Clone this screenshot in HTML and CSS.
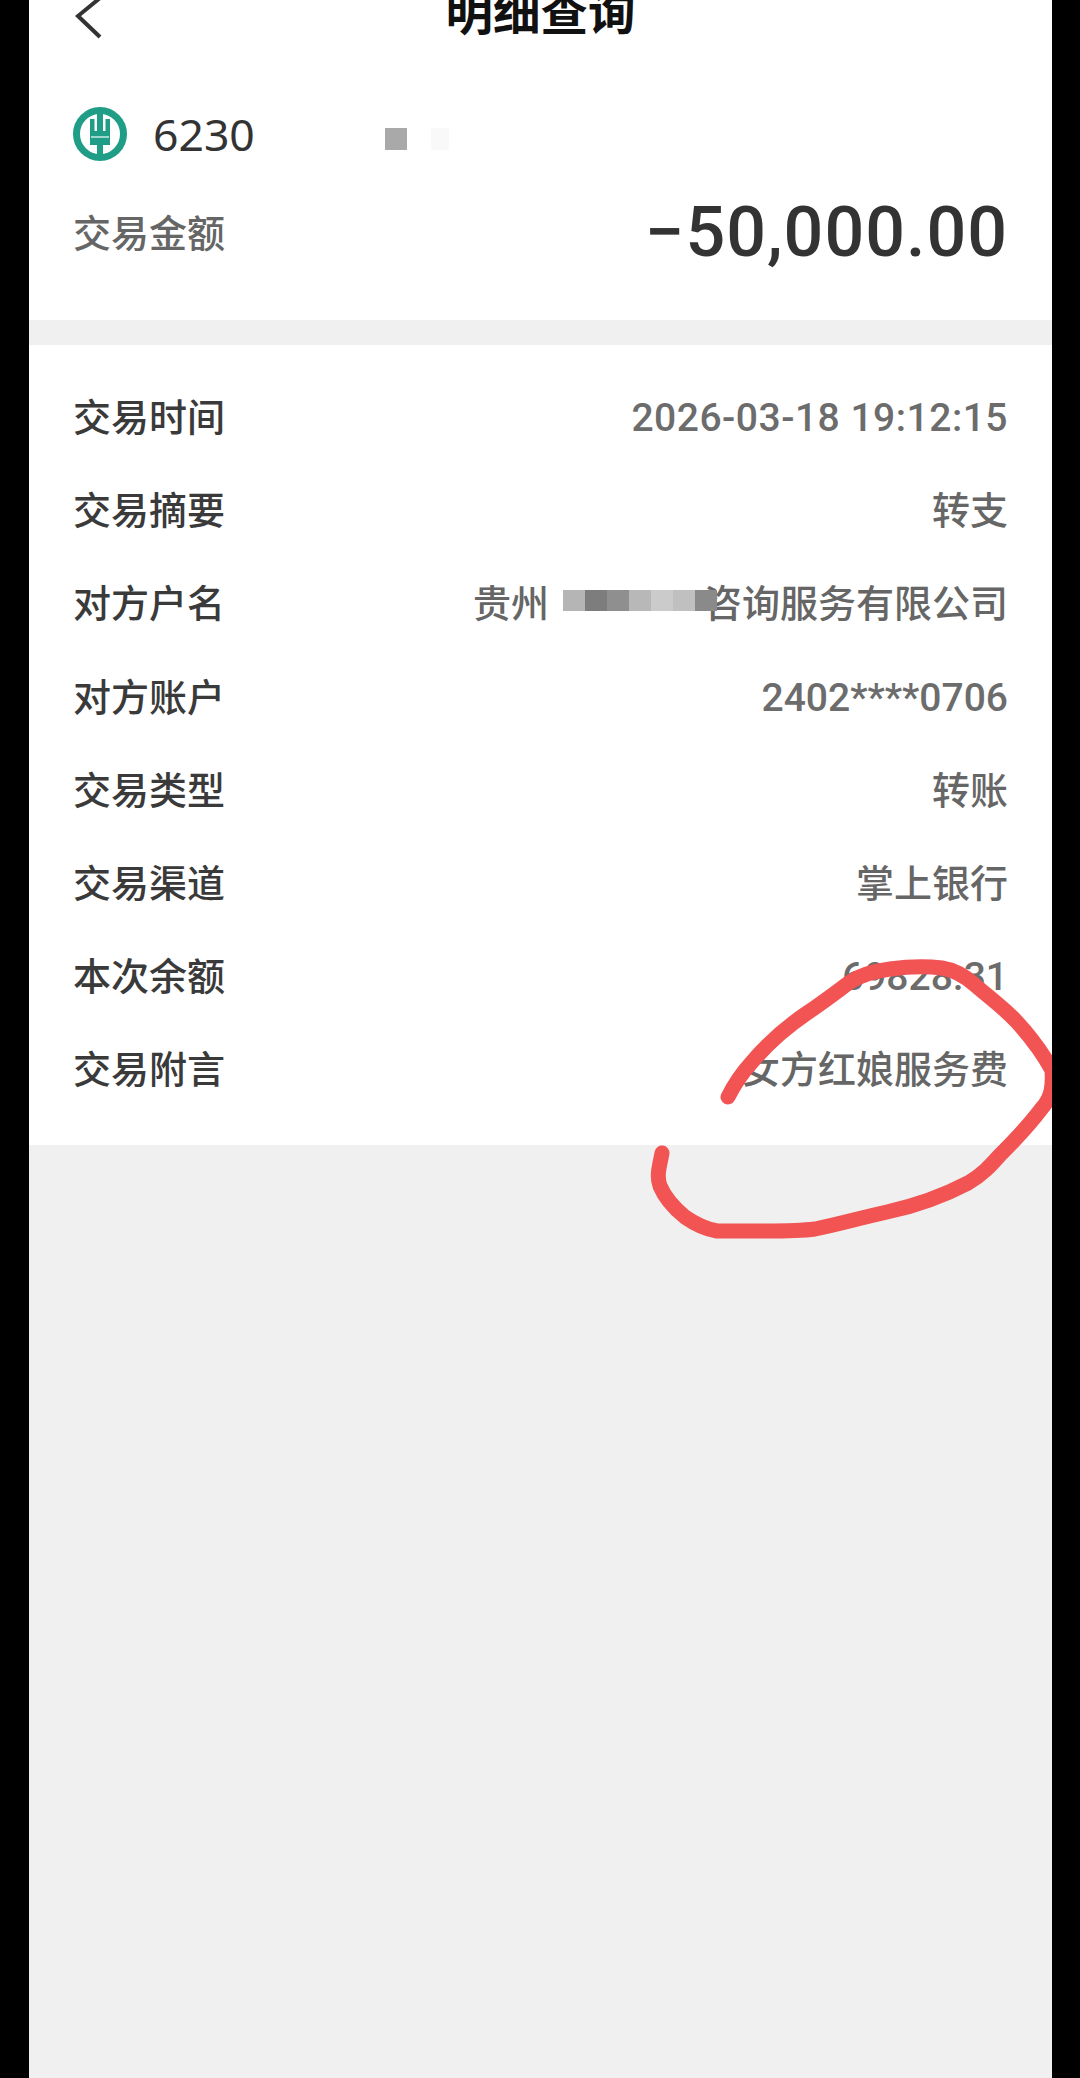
FILE: index.html
```html
<!DOCTYPE html>
<html lang="zh-CN">
<head>
  <meta charset="UTF-8">
  <meta name="viewport" content="width=device-width, initial-scale=1.0">
  <title>明细查询</title>
  <link rel="stylesheet" href="styles.css">
</head>
<body>
  <div class="page">
    <div class="header">
      <svg class="back" width="32" height="40" viewBox="0 0 32 40">
        <path d="M29 -2 L7 16 L29 37" fill="none" stroke="#333" stroke-width="4"/>
      </svg>
      <h1 class="title">明细查询</h1>
    </div>

    <div class="summary">
      <div class="card-row">
        <svg class="logo" width="56" height="56" viewBox="0 0 56 56">
          <circle cx="28" cy="28" r="23.5" fill="none" stroke="#1f9d86" stroke-width="7"/>
          <path d="M18 13 V39 H38 V13 H33.500 V25 H22.500 V13 Z" fill="#1f9d86"/>
          <rect x="25" y="3" width="6" height="22" fill="#1f9d86"/>
          <rect x="25" y="39" width="6" height="15" fill="#1f9d86"/>
          <path d="M19 31 H37" stroke="#d8f0ea" stroke-width="1.400"/>
        </svg>
        <span class="card-no">6230</span>
        <span class="blur-dark"></span>
        <span class="blur-faint"></span>
      </div>
      <div class="amount-row">
        <span class="amount-label">交易金额</span>
        <span class="amount">−50,000.00</span>
      </div>
    </div>

    <div class="details">
      <div class="row"><span class="label">交易时间</span><span class="value num date">2026-03-18 19:12:15</span></div>
      <div class="row"><span class="label">交易摘要</span><span class="value">转支</span></div>
      <div class="row">
        <span class="label">对方户名</span>
        <span class="value company">
          <span>贵州</span>
          <span class="mosaic">
            <i class="m1"></i><i class="m2"></i><i class="m3"></i><i class="m4"></i><i class="m5"></i><i class="m6"></i><i class="m7"></i>
          </span>
          <span>咨询服务有限公司</span>
        </span>
      </div>
      <div class="row"><span class="label">对方账户</span><span class="value num">2402****0706</span></div>
      <div class="row"><span class="label">交易类型</span><span class="value">转账</span></div>
      <div class="row"><span class="label">交易渠道</span><span class="value">掌上银行</span></div>
      <div class="row"><span class="label">本次余额</span><span class="value num">69828.31</span></div>
      <div class="row"><span class="label">交易附言</span><span class="value">女方红娘服务费</span></div>
    </div>

    <!-- hand drawn circle on top of the screenshot -->
    <svg class="scribble" width="1023" height="2078" viewBox="29 0 1023 2078">
      <path d="M728 1097 C734 1085 742 1073 752 1062 C768 1043 785 1028 807 1013 C822 1003 835 993 850 982 C862 974 875 971 890 969 C905 967 925 966 942 968 C955 970 965 976 975 985 C990 998 1004 1008 1016 1021 C1030 1036 1042 1052 1052 1070 C1053 1085 1052 1097 1042 1108 C1030 1124 1015 1140 1000 1155 C990 1166 982 1175 968 1183 C945 1195 915 1206 887 1212 C860 1218 840 1224 815 1229 C800 1231 780 1231 765 1231 L717 1231 C705 1229 695 1224 685 1217 C674 1208 665 1198 660 1186 C656 1175 660 1165 662 1153" fill="none" stroke="#f25353" stroke-width="15" stroke-linecap="round" stroke-linejoin="round"/>
    </svg>
  </div>
</body>
</html>
```

FILE: styles.css
```css
* {
  box-sizing: border-box;
}

html, body {
  margin: 0;
  height: 100%;
}

body {
  background: #000;
  padding: 0 28px 0 29px;
  font-family: "Noto Sans CJK SC", sans-serif;
  overflow: hidden;
}

.page {
  position: relative;
  height: 100%;
  background: #f0f0f0;
  overflow: hidden;
}

/* the top of the header is cut off in the photo */
.header {
  height: 40px;
  background: #fff;
  display: flex;
  align-items: flex-end;
  justify-content: center;
  position: relative;
  overflow: hidden;
}

.back {
  position: absolute;
  left: 42px;
  top: 0;
}

.title {
  margin: 0;
  font-size: 47.500px;
  line-height: 60px;
  font-weight: 700;
  color: #111;
}

.summary {
  height: 280px;
  background: #fff;
  padding: 66px 44px 0 44px;
}

.card-row {
  display: flex;
  align-items: center;
  height: 56px;
}

.logo {
  margin-left: -1px;
}

.card-no {
  margin: -2px 0 0 25px;
  font-size: 44.500px;
  color: #333;
  font-family: "Noto Sans", sans-serif;
}

.blur-dark {
  width: 22px;
  height: 22px;
  margin: 10px 0 0 130px;
  background: #a9a9a9;
}

.blur-faint {
  width: 18px;
  height: 22px;
  margin: 10px 0 0 24px;
  background: #f9f9f9;
}

.amount-row {
  display: flex;
  justify-content: space-between;
  align-items: center;
  margin-top: 29px;
}

.amount-label {
  margin-top: -4px;
  font-size: 38px;
  font-weight: 500;
  color: #666;
}

.amount {
  font-family: Roboto, sans-serif;
  font-size: 70px;
  font-weight: 500;
  letter-spacing: 1px;
  color: #333;
}

.details {
  margin-top: 25px;
  height: 800px;
  background: #fff;
  padding: 23px 44px 0 44px;
}

.row {
  height: 93.200px;
  display: flex;
  justify-content: space-between;
  align-items: center;
}

.label {
  font-size: 38px;
  font-weight: 500;
  color: #3a3a3a;
}

.value {
  font-size: 38px;
  font-weight: 500;
  color: #666;
}

.num {
  margin-top: 7px;
  font-family: Roboto, sans-serif;
  font-size: 39px;
  color: #6c6c6c;
}

.date {
  letter-spacing: 0.500px;
}

.company {
  display: flex;
  align-items: center;
}

.mosaic {
  display: flex;
  margin: 0 -13px 0 14px;
  position: relative;
}

.mosaic i {
  width: 22px;
  height: 21px;
}

.m1 { background: #b5b5b5; }
.m2 { background: #7d7d7d; }
.m3 { background: #8f8f8f; }
.m4 { background: #b8b8b8; }
.m5 { background: #cbcbcb; }
.m6 { background: #c0c0c0; }
.m7 { background: #8a8a8a; }

.scribble {
  position: absolute;
  left: 0;
  top: 0;
}
```
